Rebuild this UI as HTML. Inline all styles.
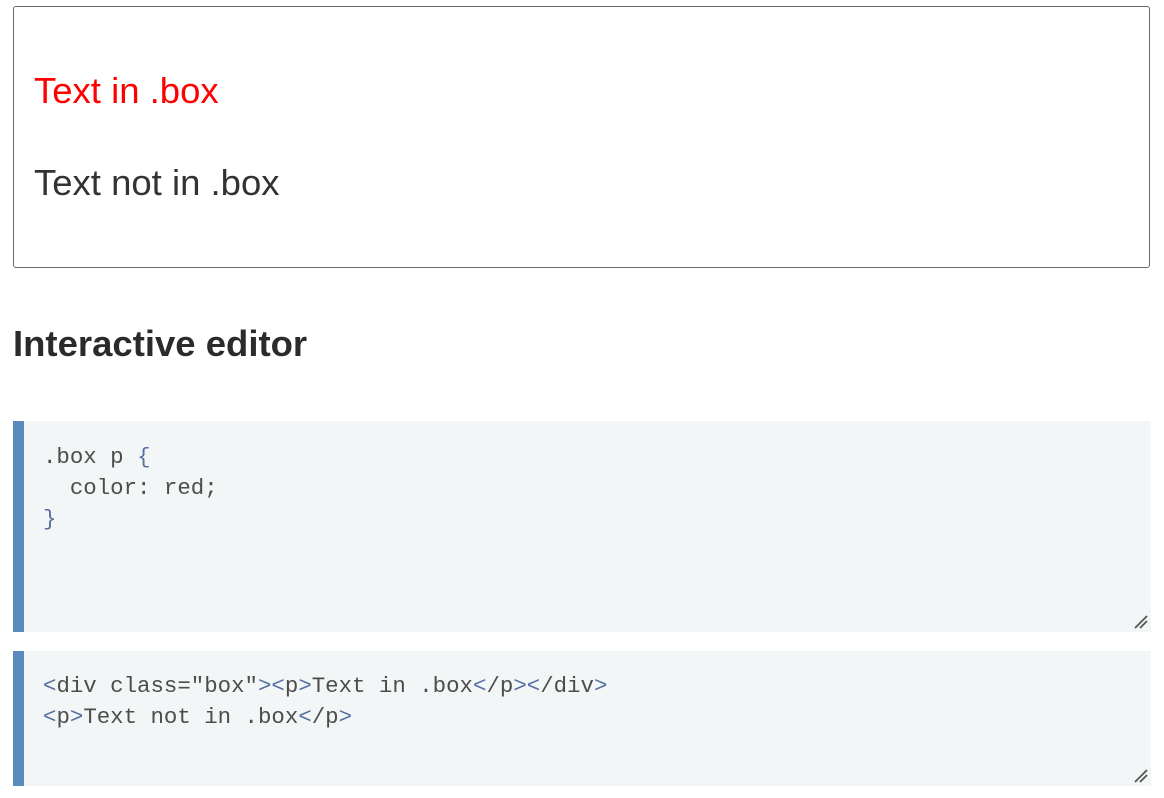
<!DOCTYPE html>
<html><head><style>
body{margin:0;background:#fff;font-family:"Liberation Sans",sans-serif;color:#333;}
.box{position:absolute;left:13px;top:6px;width:1135px;height:260px;border:1px solid #6b6b6b;border-radius:3px;}
.t{position:absolute;left:20px;font-size:36.5px;line-height:40px;}
h2{position:absolute;left:13px;top:322px;margin:0;font-size:36.5px;line-height:44px;font-weight:bold;color:#2b2b2b;}
.ed{position:absolute;left:13px;width:1138px;background:#f3f6f7;border-left:11px solid #5a8bbd;box-sizing:border-box;}
pre{margin:0;position:absolute;left:19px;font-family:"Liberation Mono","Noto Serif CJK SC",monospace;font-size:22.4px;line-height:31px;color:#4d4d4d;}
.b{color:#5670a0}
.rz{position:absolute;right:3px;bottom:3px;width:14px;height:14px;}
</style></head><body>
<div class="box">
<div class="t" style="top:64px;color:#f00">Text in .box</div>
<div class="t" style="top:156px;color:#333">Text not in .box</div>
</div>
<h2>Interactive editor</h2>
<div class="ed" style="top:421px;height:211px">
<pre style="top:21px">.box p <span class="b">{</span>
  color: red;
<span class="b">}</span></pre>
<svg class="rz" viewBox="0 0 14 14"><path d="M1 13L13 1M6 13L13 6" stroke="#555" stroke-width="1.8"/></svg>
</div>
<div class="ed" style="top:651px;height:135px">
<pre style="top:20px"><span class="b">&lt;</span>div class="box"<span class="b">&gt;&lt;</span>p<span class="b">&gt;</span>Text in .box<span class="b">&lt;</span>/p<span class="b">&gt;&lt;</span>/div<span class="b">&gt;</span>
<span class="b">&lt;</span>p<span class="b">&gt;</span>Text not in .box<span class="b">&lt;</span>/p<span class="b">&gt;</span></pre>
<svg class="rz" viewBox="0 0 14 14"><path d="M1 13L13 1M6 13L13 6" stroke="#555" stroke-width="1.8"/></svg>
</div>
</body></html>
